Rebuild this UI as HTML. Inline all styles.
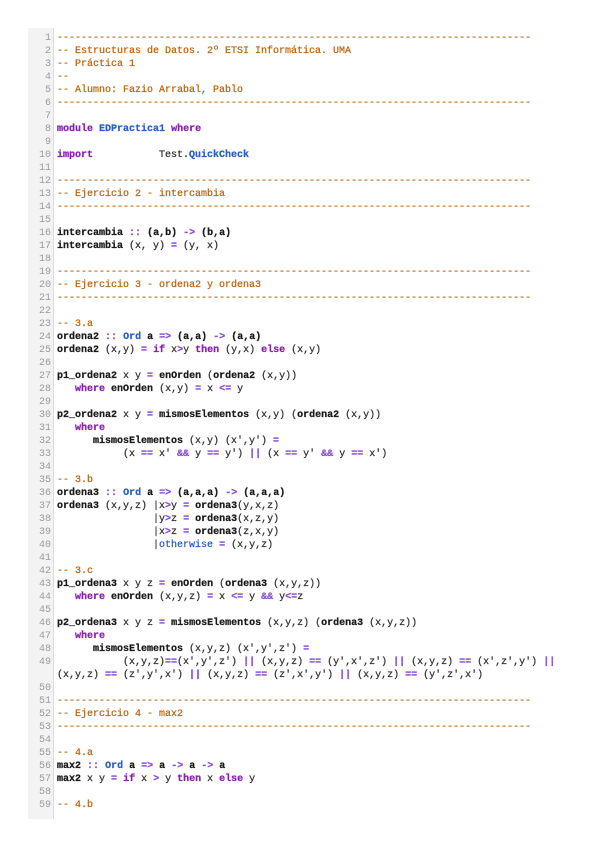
<!DOCTYPE html>
<html><head><meta charset="utf-8"><style>
html,body{margin:0;padding:0;background:#fff;width:600px;height:848px;overflow:hidden}
.g{position:absolute;left:28px;top:28px;width:25px;height:791px;background:#f3f3f3;border-right:1px solid #ddd}
pre{margin:0;position:absolute;top:31.5px;font-family:"Liberation Mono",monospace;font-size:10px;line-height:13px;white-space:pre}
.n{left:28px;width:23px;text-align:right;color:#9a9a9a}
.c{left:57px;color:#333;-webkit-text-stroke:0.25px}
.m{color:#bf6510}
.k{color:#8a1fb0;font-weight:bold}
.t{color:#2a5fc4;font-weight:bold}
.o{color:#8a4fd8;font-weight:bold}
.f{color:#1a1a1a;font-weight:bold}
</style></head><body>
<div class="g"></div>
<pre class="n">1
2
3
4
5
6
7
8
9
10
11
12
13
14
15
16
17
18
19
20
21
22
23
24
25
26
27
28
29
30
31
32
33
34
35
36
37
38
39
40
41
42
43
44
45
46
47
48
49

50
51
52
53
54
55
56
57
58
59</pre>
<pre class="c"><span class="m">-------------------------------------------------------------------------------</span>
<span class="m">-- Estructuras de Datos. 2º ETSI Informática. UMA</span>
<span class="m">-- Práctica 1</span>
<span class="m">--</span>
<span class="m">-- Alumno: Fazio Arrabal, Pablo</span>
<span class="m">-------------------------------------------------------------------------------</span>

<span class="k">module</span> <span class="t">EDPractica1</span> <span class="k">where</span>

<span class="k">import</span>           Test.<span class="t">QuickCheck</span>

<span class="m">-------------------------------------------------------------------------------</span>
<span class="m">-- Ejercicio 2 - intercambia</span>
<span class="m">-------------------------------------------------------------------------------</span>

<span class="f">intercambia</span> <span class="o">::</span> <span class="f">(a,b)</span> <span class="o">-&gt;</span> <span class="f">(b,a)</span>
<span class="f">intercambia</span> (x, y) <span class="o">=</span> (y, x)

<span class="m">-------------------------------------------------------------------------------</span>
<span class="m">-- Ejercicio 3 - ordena2 y ordena3</span>
<span class="m">-------------------------------------------------------------------------------</span>

<span class="m">-- 3.a</span>
<span class="f">ordena2</span> <span class="o">::</span> <span class="t">Ord</span> <span class="f">a</span> <span class="o">=&gt;</span> <span class="f">(a,a)</span> <span class="o">-&gt;</span> <span class="f">(a,a)</span>
<span class="f">ordena2</span> (x,y) <span class="o">=</span> <span class="k">if</span> x<span class="o">&gt;</span>y <span class="k">then</span> (y,x) <span class="k">else</span> (x,y)

<span class="f">p1_ordena2</span> x y <span class="o">=</span> <span class="f">enOrden</span> (<span class="f">ordena2</span> (x,y))
   <span class="k">where</span> <span class="f">enOrden</span> (x,y) <span class="o">=</span> x <span class="o">&lt;=</span> y

<span class="f">p2_ordena2</span> x y <span class="o">=</span> <span class="f">mismosElementos</span> (x,y) (<span class="f">ordena2</span> (x,y))
   <span class="k">where</span>
      <span class="f">mismosElementos</span> (x,y) (x',y') <span class="o">=</span>
           (x <span class="o">==</span> x' <span class="o">&amp;&amp;</span> y <span class="o">==</span> y') <span class="o">||</span> (x <span class="o">==</span> y' <span class="o">&amp;&amp;</span> y <span class="o">==</span> x')

<span class="m">-- 3.b</span>
<span class="f">ordena3</span> <span class="o">::</span> <span class="t">Ord</span> <span class="f">a</span> <span class="o">=&gt;</span> <span class="f">(a,a,a)</span> <span class="o">-&gt;</span> <span class="f">(a,a,a)</span>
<span class="f">ordena3</span> (x,y,z) |x<span class="o">&gt;</span>y <span class="o">=</span> <span class="f">ordena3</span>(y,x,z)
                |y<span class="o">&gt;</span>z <span class="o">=</span> <span class="f">ordena3</span>(x,z,y)
                |x<span class="o">&gt;</span>z <span class="o">=</span> <span class="f">ordena3</span>(z,x,y)
                |<span class="t" style="font-weight:normal">otherwise</span> <span class="o">=</span> (x,y,z)

<span class="m">-- 3.c</span>
<span class="f">p1_ordena3</span> x y z <span class="o">=</span> <span class="f">enOrden</span> (<span class="f">ordena3</span> (x,y,z))
   <span class="k">where</span> <span class="f">enOrden</span> (x,y,z) <span class="o">=</span> x <span class="o">&lt;=</span> y <span class="o">&amp;&amp;</span> y<span class="o">&lt;=</span>z

<span class="f">p2_ordena3</span> x y z <span class="o">=</span> <span class="f">mismosElementos</span> (x,y,z) (<span class="f">ordena3</span> (x,y,z))
   <span class="k">where</span>
      <span class="f">mismosElementos</span> (x,y,z) (x',y',z') <span class="o">=</span>
           (x,y,z)<span class="o">==</span>(x',y',z') <span class="o">||</span> (x,y,z) <span class="o">==</span> (y',x',z') <span class="o">||</span> (x,y,z) <span class="o">==</span> (x',z',y') <span class="o">||</span>
(x,y,z) <span class="o">==</span> (z',y',x') <span class="o">||</span> (x,y,z) <span class="o">==</span> (z',x',y') <span class="o">||</span> (x,y,z) <span class="o">==</span> (y',z',x')

<span class="m">-------------------------------------------------------------------------------</span>
<span class="m">-- Ejercicio 4 - max2</span>
<span class="m">-------------------------------------------------------------------------------</span>

<span class="m">-- 4.a</span>
<span class="f">max2</span> <span class="o">::</span> <span class="t">Ord</span> <span class="f">a</span> <span class="o">=&gt;</span> <span class="f">a</span> <span class="o">-&gt;</span> <span class="f">a</span> <span class="o">-&gt;</span> <span class="f">a</span>
<span class="f">max2</span> x y <span class="o">=</span> <span class="k">if</span> x <span class="o">&gt;</span> y <span class="k">then</span> x <span class="k">else</span> y

<span class="m">-- 4.b</span></pre>
</body></html>
